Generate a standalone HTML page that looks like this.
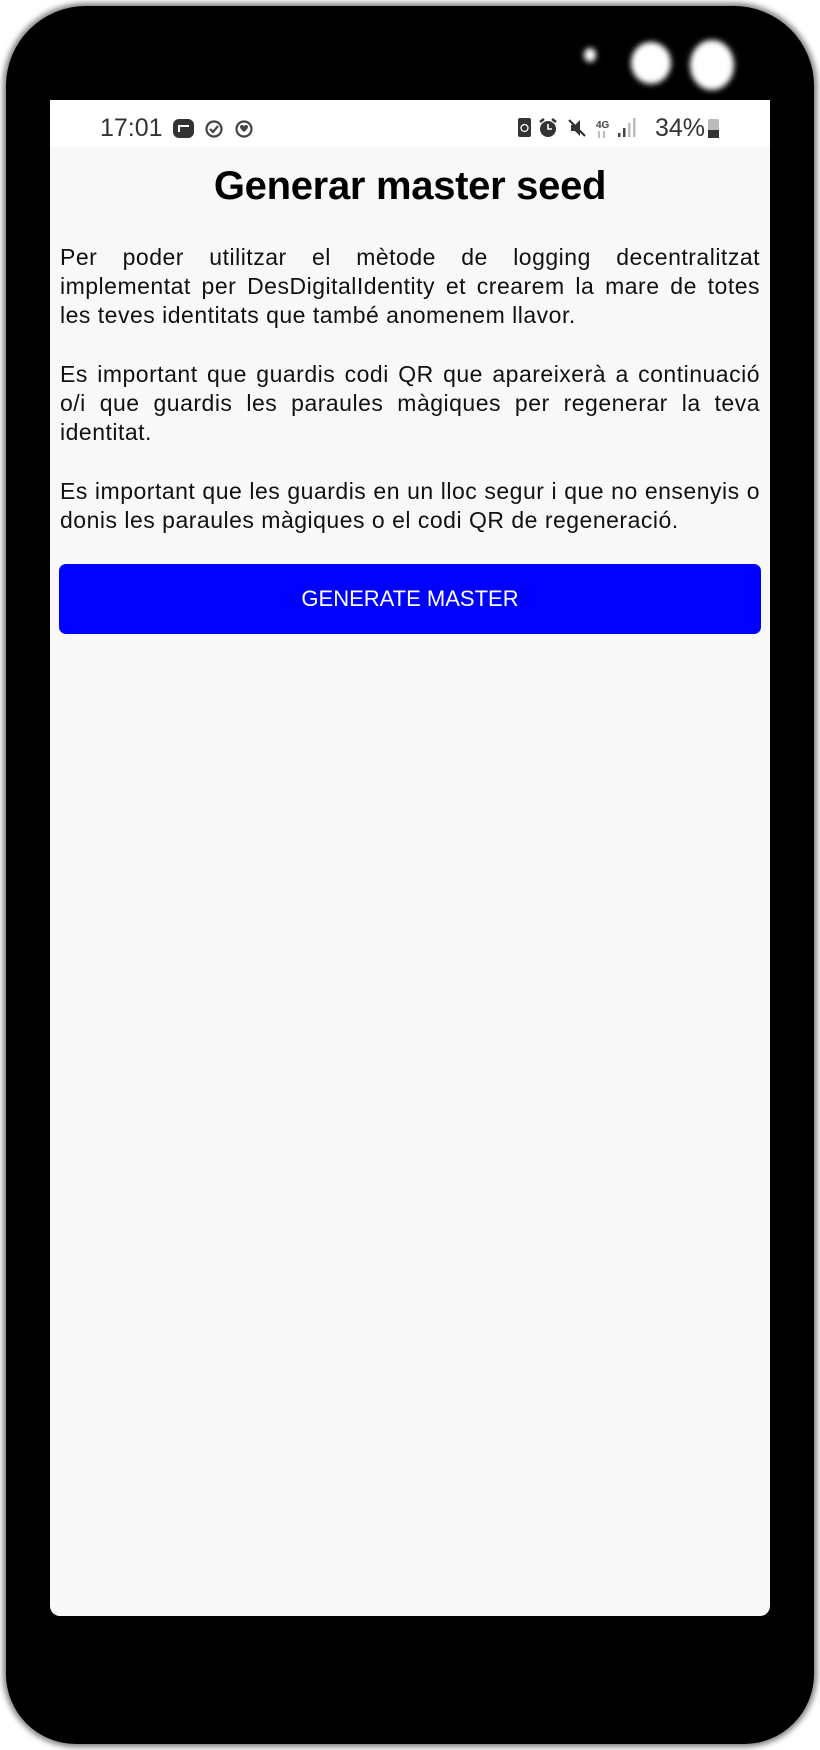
<!DOCTYPE html>
<html><head><meta charset="utf-8"><style>
html,body{margin:0;padding:0;width:820px;height:1750px;background:#fff;overflow:hidden;font-family:"Liberation Sans",sans-serif}
.phone{position:absolute;left:6px;top:6px;width:808px;height:1738px;background:#000;border-radius:80px 80px 70px 70px;box-shadow:0 0 6px 3px rgba(0,0,0,.5)}
.cam{position:absolute;background:#fff;border-radius:50%;filter:blur(3px)}
.screen{position:absolute;left:50px;top:100px;width:720px;height:1516px;background:#f8f8f8;border-radius:0 0 10px 10px}
.sb{position:absolute;left:0;top:0;width:720px;height:47px;background:#fff}
.time{position:absolute;left:50px;top:14px;font-size:25px;color:#333}
.pct{position:absolute;left:605px;top:14px;font-size:25px;color:#333}
h1{position:absolute;left:0;width:720px;top:64px;margin:0;text-align:center;font-size:40px;font-weight:bold;color:#000;letter-spacing:-0.3px}
.p{position:absolute;left:10px;width:700px;font-size:23px;letter-spacing:0.5px;line-height:29px;color:#111}
.p span{display:block;text-align:justify;text-align-last:justify;white-space:nowrap}
.p span.l{text-align-last:left}
.btn{position:absolute;left:9px;top:464px;width:702px;height:70px;background:#0000ff;border-radius:7px;color:#fff;font-size:22px;text-align:center;line-height:70px}
</style></head><body>
<div class="phone">
<div class="cam" style="left:578px;top:42px;width:12px;height:14px"></div>
<div class="cam" style="left:625px;top:36px;width:40px;height:42px"></div>
<div class="cam" style="left:684px;top:34px;width:44px;height:50px"></div>
</div>
<div class="screen">
<div class="sb">
<div class="time">17:01</div>
<svg style="position:absolute;left:122px;top:17px" width="110" height="22" viewBox="0 0 110 22">
<rect x="1" y="2" width="21" height="19" rx="6" fill="#333"/><rect x="6" y="8" width="11" height="7" fill="#fff"/><rect x="8" y="10" width="9" height="5" fill="#333"/>
<circle cx="42" cy="12" r="7.5" fill="none" stroke="#444" stroke-width="2.2"/><path d="M38 12l3 3 5-6" fill="none" stroke="#444" stroke-width="2.2"/>
<circle cx="72" cy="12" r="7.5" fill="none" stroke="#444" stroke-width="2.2"/><path d="M68 10a2 2 0 0 1 4 0a2 2 0 0 1 4 0c0 2-4 5-4 5s-4-3-4-5z" fill="#444"/>
</svg>
<svg style="position:absolute;left:465px;top:15px" width="140" height="26" viewBox="0 0 140 26">
<rect x="3" y="3" width="13" height="19" rx="2" fill="#333"/><circle cx="9.5" cy="13" r="3.5" fill="none" stroke="#fff" stroke-width="1.3"/>
<circle cx="33" cy="14" r="8" fill="#333"/><path d="M33 9v5h4" stroke="#fff" stroke-width="1.6" fill="none"/><path d="M25 7l4-3M41 7l-4-3" stroke="#333" stroke-width="2.5"/>
<path d="M56 10h4l5-5v16l-5-5h-4z" fill="#333"/><path d="M54 5l16 16" stroke="#333" stroke-width="2.2"/>
<text x="81" y="13" font-size="10" font-weight="bold" fill="#444" font-family="Liberation Sans">4G</text><path d="M84 16v7M89 16v7" stroke="#aaa" stroke-width="1.5"/>
<rect x="103" y="18" width="2.5" height="4" fill="#444"/><rect x="108" y="13" width="2.5" height="9" fill="#444"/><rect x="113" y="8" width="2.5" height="14" fill="#bbb"/><rect x="118" y="3" width="2.5" height="19" fill="#bbb"/>
</svg>
<div class="pct">34%</div>
<svg style="position:absolute;left:657px;top:17px" width="14" height="22"><rect x="1" y="2" width="11" height="19" rx="2" fill="#bbb"/><rect x="1" y="13" width="11" height="8" fill="#333"/></svg>
</div>
<h1>Generar master seed</h1>
<div class="p" style="top:143px"><span>Per poder utilitzar el mètode de logging decentralitzat</span><span>implementat per DesDigitalIdentity et crearem la mare de totes</span><span class="l">les teves identitats que també anomenem llavor.</span></div>
<div class="p" style="top:260px"><span>Es important que guardis codi QR que apareixerà a continuació</span><span>o/i que guardis les paraules màgiques per regenerar la teva</span><span class="l">identitat.</span></div>
<div class="p" style="top:377px"><span>Es important que les guardis en un lloc segur i que no ensenyis o</span><span class="l">donis les paraules màgiques o el codi QR de regeneració.</span></div>
<div class="btn">GENERATE MASTER</div>
</div>
</body></html>
